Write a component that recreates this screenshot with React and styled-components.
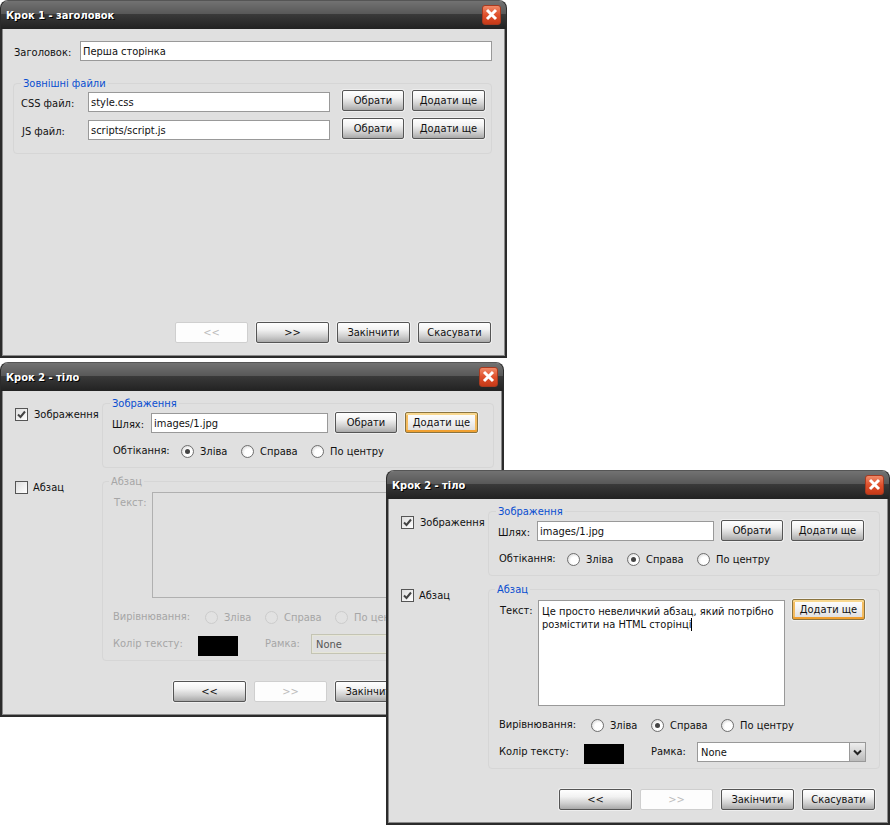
import React from 'react';
import styled, { createGlobalStyle, css } from 'styled-components';

const Global = createGlobalStyle`
  html, body { margin: 0; padding: 0; background: #fff; }
  * { box-sizing: border-box; }
`

const Desktop = styled.div`
  position: relative;
  width: 891px;
  height: 826px;
  overflow: hidden;
  background: #fff;
  font-family: "DejaVu Sans", "Liberation Sans", sans-serif;
  font-stretch: condensed;
  font-size: 11px;
  color: #111;
`
const Frame = styled.section`
  position: absolute;
  left: ${p => p.$x}px;
  top: ${p => p.$y}px;
  width: ${p => p.$w}px;
  height: ${p => p.$h}px;
  display: flex;
  flex-direction: column;
  background: #e0e0e0;
  border: 2px solid #2b2b2b;
  border-top: 1px solid #555;
  border-radius: 8px 8px 0 0;
  box-shadow: inset 1px 0 #8a8a8a, inset -1px 0 #8a8a8a, inset 0 -1px #8a8a8a;
`
const TitleBar = styled.header`
  flex: none;
  height: 28px;
  margin: 0 -1px;
  padding: 1px 5px 0 5px;
  display: flex;
  align-items: center;
  justify-content: space-between;
  border-radius: 7px 7px 0 0;
  background: linear-gradient(#727272 0, #585858 13px, #3a3a3a 13px, #222 28px);
  font-weight: bold;
  color: #fff;
  text-shadow: 1px 1px 0 #000;
`
const CloseBox = styled.span`
  width: 19px;
  height: 20px;
  margin-top: -2px;
  display: flex;
  align-items: center;
  justify-content: center;
  border: 1px solid #a83a20;
  border-radius: 3px;
  background: linear-gradient(#f08a68, #e0502c 50%, #c63a18);
`
const Body = styled.div`
  flex: 1;
  display: flex;
  flex-direction: column;
  padding: ${p => p.$top}px ${p => p.$right}px 0 11px;
`
const Footer = styled.footer`
  margin-top: auto;
  padding: 0 ${p => p.$right}px ${p => p.$bottom}px 0;
  display: flex;
  justify-content: flex-end;
  gap: 8px;
`
const Btn = styled.button`
  flex: none;
  width: ${p => p.$w || 73}px;
  height: 21px;
  padding: 0;
  font: inherit;
  font-stretch: condensed;
  color: #111;
  border: 1px solid #555;
  border-radius: 2px;
  background: linear-gradient(#fff 0, #f2f2f2 35%, #cfcfcf 70%, #a9a9a9 100%);
  box-shadow: 0 0 0 1px #eee;
  ${p => p.$focused && css`
    border-color: #8a7440;
    box-shadow: 0 0 0 1px #eee, inset 0 2px #f8d890, inset 0 -2px #f0a030, inset 2px 0 #f4bc60, inset -2px 0 #f4bc60;
    background: linear-gradient(#fff 0, #f4f4f4 40%, #dcdcdc 100%);
  `}
  &:disabled {
    color: #bcbcbc;
    border-color: #cfcfcf;
    background: #fdfdfd;
    box-shadow: none;
  }
`
const Input = styled.input`
  display: block;
  width: ${p => (p.$w ? `${p.$w}px` : 'auto')};
  flex: ${p => (p.$w ? 'none' : 1)};
  min-width: 0;
  height: 20px;
  margin-top: ${p => p.$mt || 0}px;
  padding: 0 2px;
  font: inherit;
  font-stretch: condensed;
  color: #111;
  background: #fff;
  border: 1px solid #999;
  outline: none;
`
const TitleRow = styled.div`
  display: flex;
  align-items: flex-start;
  padding-left: 1px;
`
const Label = styled.label`
  flex: none;
  width: ${p => p.$w}px;
  padding-top: ${p => p.$drop || 0}px;
  padding-bottom: ${p => p.$lift || 0}px;
  padding-left: ${p => p.$indent || 0}px;
  fieldset:disabled & { color: #a6a6a6; }
`
const Group = styled.fieldset`
  flex: ${p => (p.$side ? 1 : 'none')};
  min-width: 0;
  margin: ${p => p.$gap || 0}px 0 0 0;
  padding: ${p => p.$pad};
  border: 1px solid #d6d6d6;
  border-radius: 4px;
`
const Legend = styled.legend`
  margin-left: ${p => p.$shift || 0}px;
  padding: 2px 2px 0;
  line-height: 12px;
  color: #0a4ed0;
  fieldset:disabled & { color: #a6a6a6; }
`
const Rows = styled.div`
  display: flex;
  flex-direction: column;
  gap: ${p => p.$gap}px;
`
const Row = styled.div`
  display: flex;
  align-items: ${p => (p.$top ? 'flex-start' : 'center')};
  margin-top: ${p => p.$mt || 0}px;
`
const Spacer = styled.span`
  flex: none;
  width: ${p => p.$w}px;
`
const RadioItem = styled.span`
  flex: none;
  width: ${p => (p.$w ? `${p.$w}px` : 'auto')};
  display: flex;
  align-items: center;
  gap: 6px;
  fieldset:disabled & { color: #a6a6a6; }
`
const RadioMark = styled.span`
  flex: none;
  width: 13px;
  height: 13px;
  display: flex;
  align-items: center;
  justify-content: center;
  border: 1px solid #6f6f6f;
  border-radius: 50%;
  background: radial-gradient(circle at 60% 60%, #fff 40%, #c8c8c8);
  fieldset:disabled & {
    border-color: #cccccc;
    background: #e2e2e2;
  }
  &::after {
    content: "";
    display: ${p => (p.$on ? 'block' : 'none')};
    width: 5px;
    height: 5px;
    border-radius: 50%;
    background: #444;
  }
`
const CheckRow = styled.div`
  flex: none;
  align-self: flex-start;
  width: 89px;
  padding: ${p => p.$top}px 0 0 2px;
  display: flex;
  align-items: center;
  gap: ${p => p.$gap}px;
`
const CheckBox = styled.span`
  flex: none;
  width: 13px;
  height: 13px;
  display: flex;
  align-items: center;
  justify-content: center;
  border: 1px solid #555;
  background: linear-gradient(135deg, #ddd, #fff);
`
const Section = styled.div`
  display: flex;
  margin-top: ${p => p.$gap || 0}px;
`
const TextBox = styled.div`
  flex: none;
  width: 247px;
  height: 106px;
  margin-top: 1px;
  padding: 4px 3px;
  line-height: 13px;
  background: #fff;
  border: 1px solid #999;
  fieldset:disabled & {
    background: #e0e0e0;
    border-color: #b0b0b0;
  }
`
const Caret = styled.span`
  display: inline-block;
  width: 1px;
  height: 13px;
  vertical-align: top;
  background: #000;
`
const Swatch = styled.span`
  flex: none;
  width: 40px;
  height: 20px;
  margin-top: 4px;
  background: #000;
`
const Combo = styled.div`
  flex: none;
  width: 169px;
  height: 20px;
  padding-left: 3px;
  display: flex;
  align-items: center;
  justify-content: space-between;
  background: #fff;
  border: 1px solid #999;
  fieldset:disabled & {
    background: #e0e0e0;
    border: 2px solid #e6e6d8;
    outline: 1px solid #c4c4b4;
    outline-offset: -1px;
    color: #555;
  }
`
const ComboArrow = styled.span`
  width: 16px;
  height: 18px;
  display: flex;
  align-items: center;
  justify-content: center;
  border-left: 1px solid #999;
  background: linear-gradient(#eee, #bbb);
`

const CloseIcon = () => (
  <svg width="13" height="13" viewBox="0 0 13 13">
    <path d="M2 2 L11 11 M11 2 L2 11" stroke="#fff" strokeWidth="3" />
  </svg>
)
const Tick = () => (
  <svg width="9" height="9" viewBox="0 0 9 9">
    <path d="M1 4.5 L3.5 7 L8 1.5" fill="none" stroke="#444" strokeWidth="2" />
  </svg>
)
const ChevronDown = () => (
  <svg width="9" height="7" viewBox="0 0 9 7">
    <path d="M1 1.5 L4.5 5 L8 1.5" fill="none" stroke="#222" strokeWidth="2" />
  </svg>
)

const Window = ({ x, y, w, h, title, children }) => (
  <Frame $x={x} $y={y} $w={w} $h={h}>
    <TitleBar>
      {title}
      <CloseBox><CloseIcon /></CloseBox>
    </TitleBar>
    {children}
  </Frame>
)

const NavButtons = ({ back, next, right, bottom }) => (
  <Footer $right={right} $bottom={bottom}>
    <Btn disabled={!back}>&lt;&lt;</Btn>
    <Btn disabled={!next}>&gt;&gt;</Btn>
    <Btn>Закінчити</Btn>
    <Btn>Скасувати</Btn>
  </Footer>
)

const Radios = ({ selected }) => (
  <>
    <RadioItem $w={60}><RadioMark $on={selected === 'left'} />Зліва</RadioItem>
    <RadioItem $w={70}><RadioMark $on={selected === 'right'} />Справа</RadioItem>
    <RadioItem><RadioMark $on={selected === 'center'} />По центру</RadioItem>
  </>
)

const FileRow = ({ label, indent, value }) => (
  <Row $top>
    <Label $w={67} $drop={7} $indent={indent}>{label}</Label>
    <Input $w={242} $mt={2} defaultValue={value} />
    <Spacer $w={12} />
    <Btn $w={62}>Обрати</Btn>
    <Spacer $w={8} />
    <Btn>Додати ще</Btn>
  </Row>
)

const FirstStep = () => (
  <Window x={0} y={0} w={507} h={358} title="Крок 1 - заголовок">
    <Body $top={12} $right={13}>
      <TitleRow>
        <Label $w={66} $drop={5}>Заголовок:</Label>
        <Input defaultValue="Перша сторінка" />
      </TitleRow>
      <Group $gap={15} $pad="0 0 13px 7px">
        <Legend>Зовнішні файли</Legend>
        <Rows $gap={6}>
          <FileRow label="CSS файл:" value="style.css" />
          <FileRow label="JS файл:" indent={1} value="scripts/script.js" />
        </Rows>
      </Group>
      <NavButtons next right={1} bottom={13} />
    </Body>
  </Window>
)

const SecondStep = ({ x, y, h, wrap, paragraph, align }) => (
  <Window x={x} y={y} w={504} h={h} title="Крок 2 - тіло">
    <Body $top={5} $right={8}>
      <Section>
        <CheckRow $top={12} $gap={6}>
          <CheckBox><Tick /></CheckBox>
          Зображення
        </CheckRow>
        <Group $side $pad="2px 0 8px 9px">
          <Legend $shift={-2}>Зображення</Legend>
          <Rows $gap={11}>
            <Row $top>
              <Label $w={39} $drop={6}>Шлях:</Label>
              <Input $w={177} $mt={1} defaultValue="images/1.jpg" />
              <Spacer $w={7} />
              <Btn $w={62}>Обрати</Btn>
              <Spacer $w={8} />
              <Btn $focused={!paragraph}>Додати ще</Btn>
            </Row>
            <Row>
              <Label $w={69} $indent={1} $lift={2}>Обтікання:</Label>
              <Radios selected={wrap} />
            </Row>
          </Rows>
        </Group>
      </Section>
      <Section $gap={6}>
        <CheckRow $top={7} $gap={5}>
          <CheckBox>{paragraph && <Tick />}</CheckBox>
          Абзац
        </CheckRow>
        <Group $side disabled={!paragraph} $pad="3px 0 4px 9px">
          <Legend $shift={-3}>Абзац</Legend>
          <Rows $gap={7}>
            <Row $top>
              <Label $w={40} $drop={5} $indent={2}>Текст:</Label>
              <TextBox>
                {paragraph && <>Це просто невеличкий абзац, який потрібно розмістити на HTML сторінці<Caret /></>}
              </TextBox>
              <Spacer $w={7} />
              <Btn $focused={paragraph}>Додати ще</Btn>
            </Row>
            <Row $mt={5}>
              <Label $w={93} $indent={1} $lift={2}>Вирівнювання:</Label>
              <Radios selected={align} />
            </Row>
            <Row>
              <Label $w={86} $indent={1} $lift={2}>Колір тексту:</Label>
              <Swatch />
              <Spacer $w={27} />
              <Label $w={46} $lift={2}>Рамка:</Label>
              <Combo>
                None
                {paragraph && <ComboArrow><ChevronDown /></ComboArrow>}
              </Combo>
            </Row>
          </Rows>
        </Group>
      </Section>
      <NavButtons back right={5} bottom={13} />
    </Body>
  </Window>
)

const App = () => (
  <Desktop>
    <Global />
    <FirstStep />
    <SecondStep x={0} y={362} h={355} wrap="left" paragraph={false} />
    <SecondStep x={386} y={470} h={355} wrap="right" paragraph align="right" />
  </Desktop>
)

export default App;
